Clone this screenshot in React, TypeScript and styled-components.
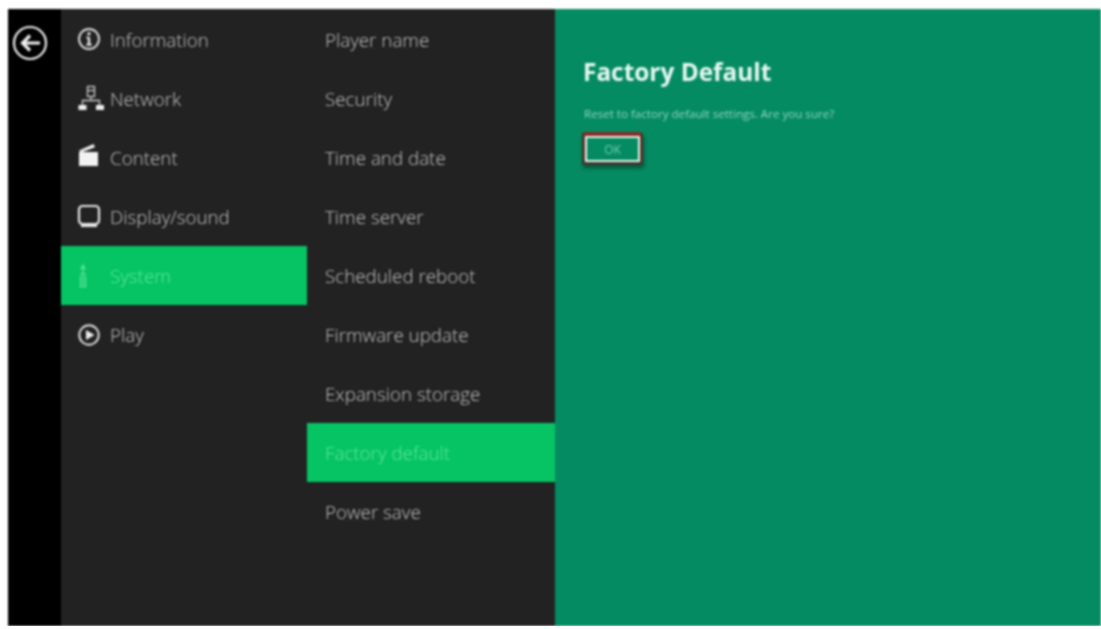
import styled, { createGlobalStyle } from "styled-components";

const GlobalStyle = createGlobalStyle`
  html, body {
    margin: 0;
    padding: 0;
    background: #fff;
    overflow: hidden;
  }
`;

const mainItems = [
  { label: "Information", icon: <InfoIcon /> },
  { label: "Network", icon: <NetworkIcon /> },
  { label: "Content", icon: <ClapperIcon /> },
  { label: "Display/sound", icon: <DisplayIcon /> },
  { label: "System", icon: <SystemIcon />, active: true },
  { label: "Play", icon: <PlayIcon /> },
];

const subItems = [
  { label: "Player name" },
  { label: "Security" },
  { label: "Time and date" },
  { label: "Time server" },
  { label: "Scheduled reboot" },
  { label: "Firmware update" },
  { label: "Expansion storage" },
  { label: "Factory default", active: true },
  { label: "Power save" },
];

export default function App() {
  return (
    <>
      <GlobalStyle />
      <Screen>
        <BackRail>
          <BackIcon />
        </BackRail>
        <MainMenu>
          {mainItems.map((item) => (
            <MainRow key={item.label} $active={item.active}>
              <IconSlot>{item.icon}</IconSlot>
              {item.label}
            </MainRow>
          ))}
        </MainMenu>
        <SubMenu>
          {subItems.map((item) => (
            <SubRow key={item.label} $active={item.active}>
              {item.label}
            </SubRow>
          ))}
        </SubMenu>
        <Content>
          <Title>Factory Default</Title>
          <Message>Reset to factory default settings. Are you sure?</Message>
          <OkButton>OK</OkButton>
        </Content>
      </Screen>
    </>
  );
}

function BackIcon() {
  return (
    <svg width="36" height="36" viewBox="0 0 36 36" fill="none" stroke="#efefef">
      <circle cx="18" cy="18" r="16" strokeWidth="2.2" />
      <path d="M28 18H11M18 10.5 10.5 18l7.5 7.5" strokeWidth="3.2" />
    </svg>
  );
}

function InfoIcon() {
  return (
    <svg width="26" height="26" viewBox="0 0 26 26" fill="none" stroke="#dedede">
      <circle cx="13" cy="12" r="10" strokeWidth="1.9" />
      <path d="M13 10.5v7M10.6 10.8H13M10.4 17.6h5.2" strokeWidth="2.4" />
      <circle cx="13" cy="6.8" r="1.7" fill="#dedede" stroke="none" />
    </svg>
  );
}

function NetworkIcon() {
  return (
    <svg width="30" height="30" viewBox="0 0 30 30" fill="none" stroke="#cfcfcf" strokeWidth="1.3">
      <rect x="11.5" y="2.5" width="7" height="10" />
      <path d="M11.5 6.5h7" />
      <path d="M15 12.5v4M6.5 21v-4.5h17V21" />
      <rect x="2.5" y="21" width="8" height="5" fill="#efefef" stroke="none" />
      <rect x="20" y="21" width="8" height="5" fill="#efefef" stroke="none" />
    </svg>
  );
}

function ClapperIcon() {
  return (
    <svg width="26" height="32" viewBox="0 0 26 32" fill="#f2f2f2">
      <rect x="3" y="10" width="19" height="14" />
      <path d="M3 8.5 17.5 2 19 5.2 5 10.5z" />
    </svg>
  );
}

function DisplayIcon() {
  return (
    <svg width="26" height="26" viewBox="0 0 26 26" fill="none" stroke="#e6e6e6">
      <rect x="3" y="2" width="20" height="18" rx="3.5" strokeWidth="2.2" />
      <path d="M5 21.5h16" strokeWidth="3" />
    </svg>
  );
}

function SystemIcon() {
  return (
    <svg width="26" height="26" viewBox="0 0 26 26" fill="none" stroke="#6fe7a6" strokeWidth="1.1">
      <path d="M7 1v24M4.5 6.5 7 3l2.5 3.5M4 11h6M4.5 25V13M9.5 25V13" />
    </svg>
  );
}

function PlayIcon() {
  return (
    <svg width="26" height="26" viewBox="0 0 26 26" fill="none" stroke="#dedede">
      <circle cx="13" cy="13" r="9.7" strokeWidth="2" />
      <path d="M10 8l8.5 5-8.5 5z" fill="#ececec" stroke="none" />
    </svg>
  );
}

const Screen = styled.div`
  width: 1093px;
  height: 617px;
  margin: 9px 0 0 8px;
  display: flex;
  font-family: "Open Sans", "Noto Sans", sans-serif;
  filter: blur(0.9px);
`;

const BackRail = styled.div`
  width: 53px;
  flex: none;
  background: #000;
  padding: 16px 0 0 4px;
  box-sizing: border-box;
`;

const MainMenu = styled.nav`
  width: 246px;
  flex: none;
  background: #222222;
  padding-top: 1px;
`;

const MainRow = styled.div<{ $active?: boolean }>`
  height: 59px;
  display: flex;
  align-items: center;
  padding-left: 15px;
  font-size: 18.8px;
  font-weight: 300;
  color: ${(p) => (p.$active ? "#62e69f" : "#c4c4c4")};
  background: ${(p) => (p.$active ? "#06c463" : "transparent")};
`;

const IconSlot = styled.span`
  width: 34px;
  flex: none;
  display: flex;
  align-items: center;
`;

const SubMenu = styled.nav`
  width: 248px;
  flex: none;
  background: #222222;
  padding-top: 1px;
`;

const SubRow = styled.div<{ $active?: boolean }>`
  height: 59px;
  display: flex;
  align-items: center;
  padding-left: 18px;
  font-size: 18.8px;
  font-weight: 300;
  color: ${(p) => (p.$active ? "#62e69f" : "#c4c4c4")};
  background: ${(p) => (p.$active ? "#06c463" : "transparent")};
`;

const Content = styled.main`
  flex: 1;
  background: #058b62;
  padding: 46px 0 0 28px;
  display: flex;
  flex-direction: column;
  align-items: flex-start;
`;

const Title = styled.h1`
  margin: 0;
  font-size: 24.4px;
  line-height: 34px;
  font-weight: 700;
  color: #e6f7f0;
`;

const Message = styled.p`
  margin: 18px 0 0 1px;
  font-size: 11.6px;
  line-height: 14px;
  font-weight: 400;
  color: #8fd6bc;
`;

const OkButton = styled.button`
  margin: 15px 0 0 2px;
  width: 55px;
  height: 26px;
  box-sizing: border-box;
  background: #058b62;
  border: 2px solid #e4f8ee;
  box-shadow: 0 -3px 0 1px #8c2a25, 0 0 0 3px #3f3a2f, 1px 3px 4px 3px rgba(0, 0, 0, 0.4);
  color: #6fcdaa;
  font-family: inherit;
  font-size: 12px;
  padding: 0;
`;
